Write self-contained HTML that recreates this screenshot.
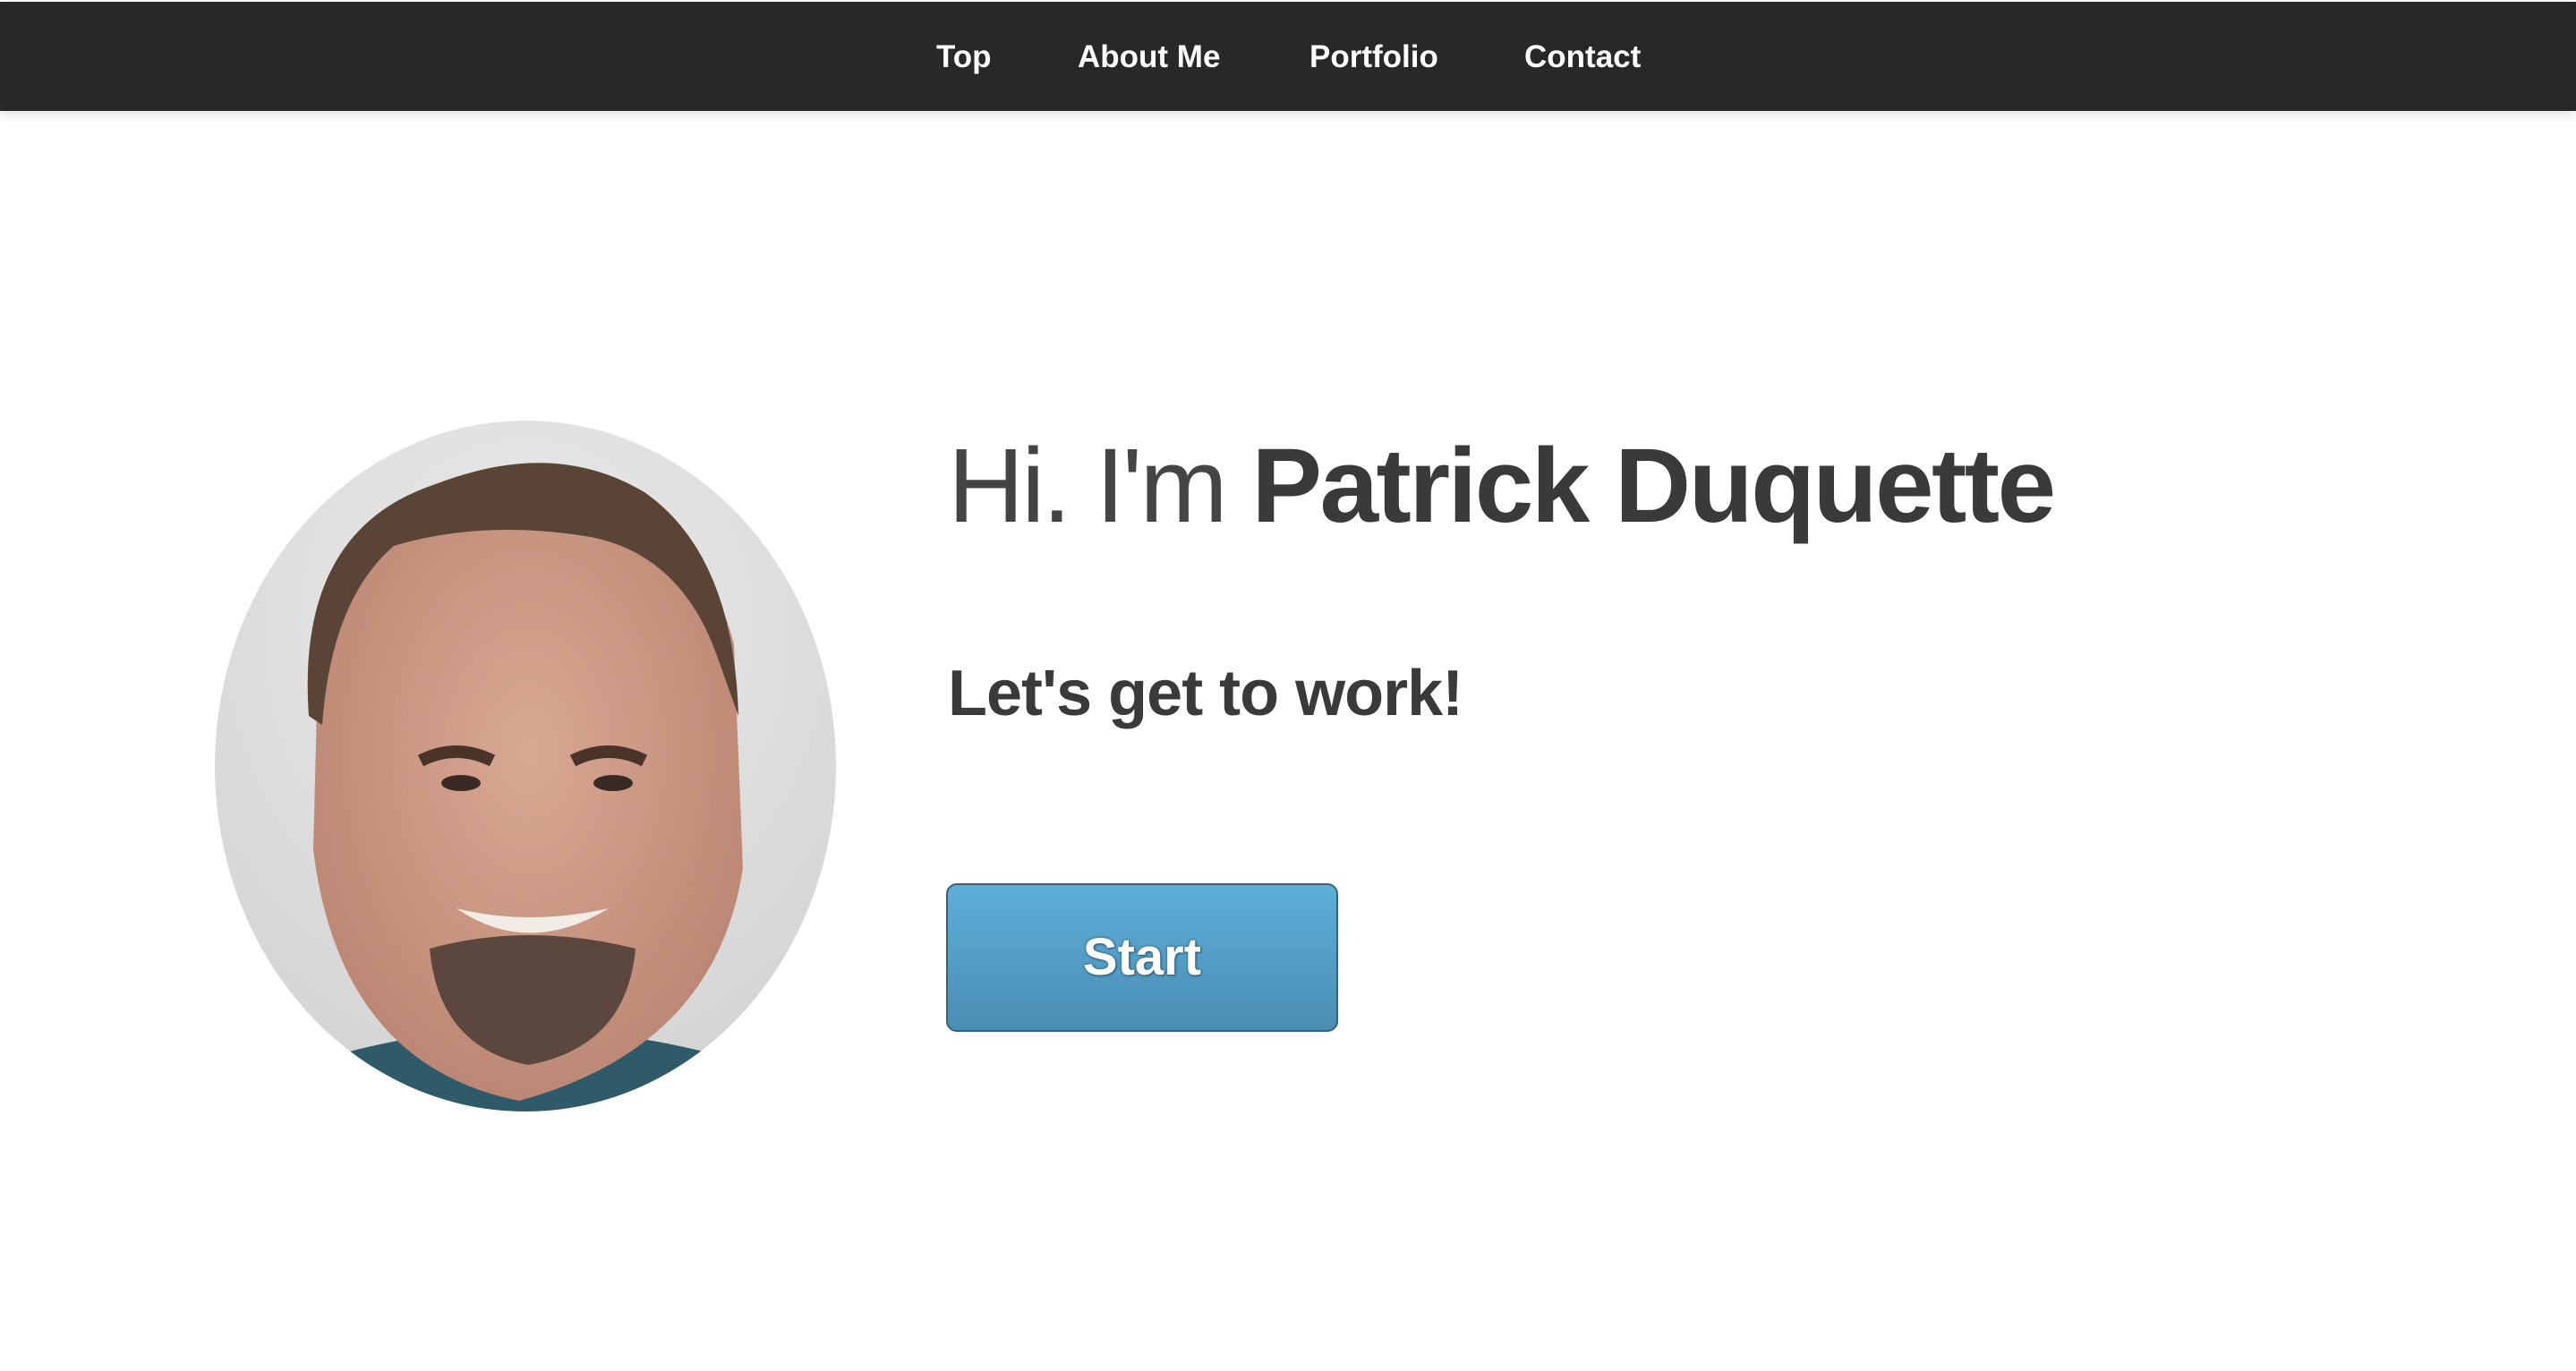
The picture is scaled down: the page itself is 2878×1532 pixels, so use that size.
<!DOCTYPE html>
<html><head><meta charset="utf-8"><style>
html,body{margin:0;padding:0;width:2878px;height:1532px;overflow:hidden;background:#fff;font-family:"Liberation Sans",sans-serif}
.nav{position:absolute;left:0;top:2px;width:2878px;height:122px;background:#282828;box-shadow:0 4px 12px rgba(0,0,0,.12)}
.nav a{position:absolute;top:40px;color:#fff;font-weight:bold;font-size:35px;text-decoration:none;line-height:44px}
h1{position:absolute;left:1059px;top:468px;margin:0;font-size:118px;font-weight:normal;color:#3a3a3a;line-height:150px;white-space:nowrap;letter-spacing:-2.6px}
h1 .l{font-weight:300;color:#444;letter-spacing:-3px}
h2{position:absolute;left:1059px;top:725px;margin:0;font-size:72px;font-weight:bold;color:#3a3a3a;line-height:100px;letter-spacing:-1px}
.btn{position:absolute;left:1057px;top:987px;width:434px;height:162px;border:2px solid #3b5f73;border-radius:12px;background:linear-gradient(#5dafd9,#4a8db4);color:#fff;font-weight:bold;font-size:58px;text-align:center;line-height:162px;text-shadow:0 0 3px #2a5a75,1px 1px 2px #2a5a75}
</style></head><body>
<div class="nav">
<a style="left:1046px">Top</a>
<a style="left:1204px">About Me</a>
<a style="left:1463px">Portfolio</a>
<a style="left:1703px">Contact</a>
</div>
<svg style="position:absolute;left:240px;top:470px" width="694" height="772" viewBox="0 0 694 772">
<defs><clipPath id="c"><ellipse cx="347" cy="386" rx="347" ry="386"/></clipPath>
<radialGradient id="bg" cx="50%" cy="30%" r="70%"><stop offset="0" stop-color="#ececec"/><stop offset="1" stop-color="#d4d4d4"/></radialGradient>
<radialGradient id="sk" cx="50%" cy="45%" r="60%"><stop offset="0" stop-color="#d9a893"/><stop offset="1" stop-color="#b98572"/></radialGradient></defs>
<g clip-path="url(#c)">
<rect width="694" height="772" fill="url(#bg)"/>
<path d="M100 720 Q340 640 600 720 L600 772 L100 772Z" fill="#2f5a6a"/>
<path d="M115 280 Q120 70 340 50 Q530 60 580 250 L590 500 Q560 700 340 760 Q140 720 110 480Z" fill="url(#sk)"/>
<path d="M105 330 Q90 120 250 70 Q380 20 480 80 Q580 150 585 330 L560 260 Q520 150 420 130 Q300 110 200 140 Q130 200 120 340Z" fill="#5a4436"/>
<path d="M230 380 Q270 360 310 380 M400 380 Q440 360 480 380" stroke="#4a342a" stroke-width="14" fill="none"/>
<ellipse cx="275" cy="405" rx="22" ry="9" fill="#3a2a24"/><ellipse cx="445" cy="405" rx="22" ry="9" fill="#3a2a24"/>
<path d="M240 590 Q350 560 470 590 Q460 700 350 720 Q250 700 240 590Z" fill="#5b473d"/>
<path d="M270 545 Q350 600 440 545 Q350 565 270 545Z" fill="#f1ece6"/>
</g>
</svg>
<h1><span class="l">Hi. I'm </span><b>Patrick Duquette</b></h1>
<h2>Let's get to work!</h2>
<div class="btn">Start</div>
</body></html>
